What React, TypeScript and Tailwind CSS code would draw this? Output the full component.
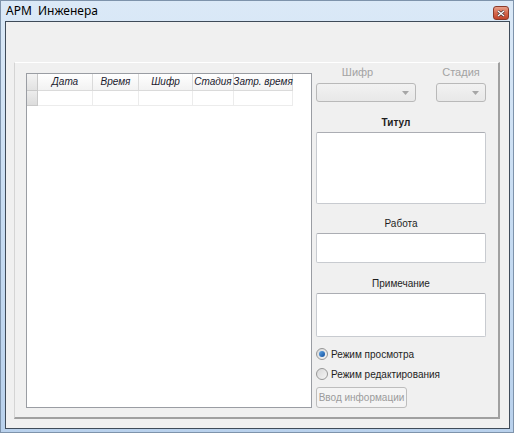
import React from "react";

const COLUMNS = [
  { title: "Дата", w: "w-[55px]" },
  { title: "Время", w: "w-[46px]" },
  { title: "Шифр", w: "w-[54px]" },
  { title: "Стадия", w: "w-[41px]" },
  { title: "Затр. время", w: "w-[59px]" },
];

function Combo({ width }: { width: string }) {
  return (
    <div
      className={`${width} h-[19px] rounded-[3px] border border-[#b9b9b9] bg-gradient-to-b from-[#f2f2f2] to-[#e8e8e8] flex items-center justify-end pr-[6px]`}
    >
      <svg width="7" height="4" viewBox="0 0 7 4">
        <path d="M0 0 L7 0 L3.5 4 Z" fill="#a6a6a6" />
      </svg>
    </div>
  );
}

function Field({ label, height, bold, shift }: { label: string; height: string; bold?: boolean; shift?: string }) {
  return (
    <div className="flex flex-col">
      <div className={`h-[13px] leading-[13px] text-center text-[#1e1e1e] ${bold ? "font-bold" : ""} ${shift ?? ""}`}>
        {label}
      </div>
      <div className={`${height} mt-[3px] rounded-[2px] border border-[#c8cbd0] border-t-[#abadb3] bg-white`} />
    </div>
  );
}

function Radio({ label, checked }: { label: string; checked?: boolean }) {
  return (
    <div className="h-[16px] flex items-center gap-[3px]">
      <div className="w-[12px] h-[12px] rounded-full border border-[#979797] bg-gradient-to-br from-[#d8d8d8] to-[#f6f6f6] flex items-center justify-center">
        {checked && <div className="w-[6px] h-[6px] rounded-full bg-gradient-to-br from-[#5ea6e6] to-[#0f4f9e]" />}
      </div>
      <span className="text-[#1e1e1e] whitespace-nowrap">{label}</span>
    </div>
  );
}

export default function App() {
  return (
    <div
      className="w-[514px] h-[433px] flex flex-col border border-[#7e93ab] bg-gradient-to-b from-[#dbe9f7] via-[#c7dcf2] to-[#b9d1ec] text-[10px] text-black"
      style={{ fontFamily: '"Liberation Sans", Arial, sans-serif' }}
    >
      {/* title bar */}
      <div className="h-[20px] shrink-0 flex items-center justify-between pl-[5px] pr-[4px]">
        <span className="text-[12px] text-black" style={{ fontFamily: '"Noto Sans", "Open Sans", sans-serif' }}>
          АРМ&nbsp; Инженера
        </span>
        <div className="w-[16px] h-[14px] mt-[4px] rounded-[3px] border border-[#8b3a2a] bg-gradient-to-b from-[#e8a08a] via-[#d5684d] to-[#c1432a] flex items-center justify-center">
          <svg width="8" height="7" viewBox="0 0 8 7">
            <path d="M1 1 L7 6 M7 1 L1 6" stroke="#3a2a30" strokeWidth="2.6" />
            <path d="M1 1 L7 6 M7 1 L1 6" stroke="#ffffff" strokeWidth="1.4" />
          </svg>
        </div>
      </div>

      {/* client area */}
      <div className="flex-1 ml-[4px] mr-[3px] mb-[3px] border border-[#3f4b59] bg-[#f0f0f0] flex flex-col pt-[40px] pl-[8px] pr-[9px] pb-[9px]">
        <div className="flex-1 flex border-t border-l border-t-white border-l-[#d4d4d4] border-r-2 border-b-2 border-r-[#a0a0a0] border-b-[#a0a0a0] pl-[11px] pr-[12px] pb-[9px]">
          {/* table */}
          <div className="w-[286px] mt-[10px] border border-[#9a9da3] bg-white flex flex-col">
            <div className="flex h-[17px]">
              <div className="w-[11px] border-r border-b border-[#c9c9c9] bg-gradient-to-b from-[#f3f3f3] to-[#e2e2e2]" />
              {COLUMNS.map((c) => (
                <div
                  key={c.title}
                  className={`${c.w} border-r border-b border-[#dadada] bg-gradient-to-b from-white to-[#f2f2f2] flex items-center justify-center italic text-[#1a1a2e] leading-none whitespace-nowrap`}
                >
                  {c.title}
                </div>
              ))}
            </div>
            <div className="flex h-[15px]">
              <div className="w-[11px] border-r border-b border-[#c9c9c9] bg-gradient-to-b from-[#ededed] to-[#dcdcdc]" />
              {COLUMNS.map((c) => (
                <div key={c.title} className={`${c.w} border-r border-b border-[#ececec]`} />
              ))}
            </div>
          </div>

          {/* right column */}
          <div className="w-[170px] ml-[4px] flex flex-col">
            <div className="mt-[3px] h-[13px] leading-[13px] flex text-[#a3a3a3] text-[11px]">
              <span className="w-[83px] text-center">Шифр</span>
              <span className="ml-[37px] w-[50px] text-center">Стадия</span>
            </div>
            <div className="mt-[4px] flex justify-between">
              <Combo width="w-[100px]" />
              <Combo width="w-[50px]" />
            </div>
            <div className="mt-[14px]">
              <Field label="Титул" height="h-[72px]" bold shift="pr-[10px]" />
            </div>
            <div className="mt-[13px]">
              <Field label="Работа" height="h-[30px]" />
            </div>
            <div className="mt-[14px]">
              <Field label="Примечание" height="h-[44px]" />
            </div>
            <div className="mt-[9px] flex flex-col gap-[4px]">
              <Radio label="Режим просмотра" checked />
              <Radio label="Режим редактирования" />
            </div>
            <div className="mt-[5px] w-[91px] h-[21px] rounded-[3px] border border-[#bdbdbd] bg-[#f4f4f4] flex items-center justify-center text-[#9b9b9b] whitespace-nowrap">
              Ввод информации
            </div>
          </div>
        </div>
      </div>
    </div>
  );
}
